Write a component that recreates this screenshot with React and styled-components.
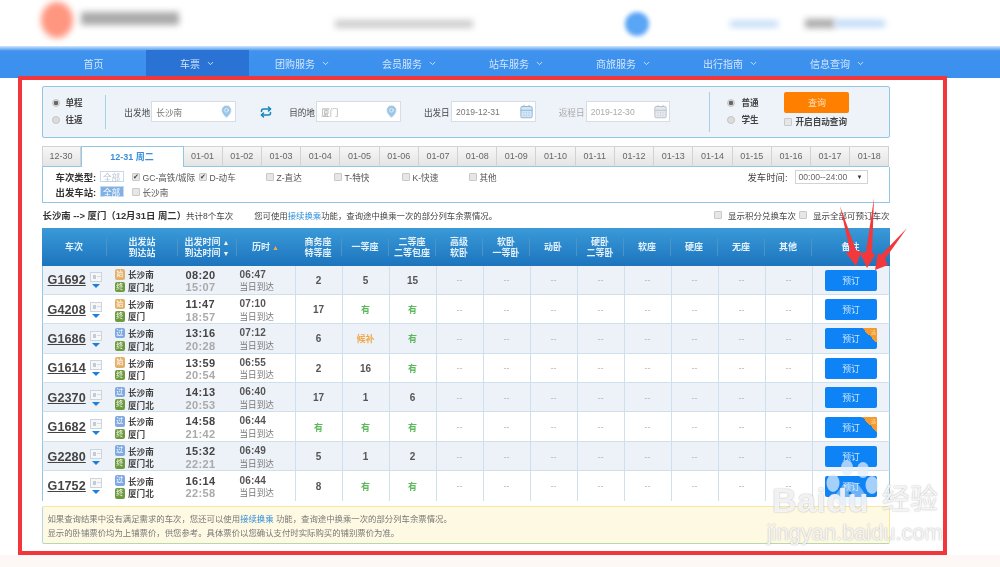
import React from "react";
import styled, { createGlobalStyle } from "styled-components";
import { MapPin, CalendarDays, Repeat, ChevronDown } from "lucide-react";

const FONT = `"Liberation Sans", "Noto Sans CJK SC", sans-serif`;
const COLS = "65px 71px 59px 58px repeat(11, 47px) 78px";

const tabDates = [
  "01-01", "01-02", "01-03", "01-04", "01-05", "01-06", "01-07", "01-08", "01-09",
  "01-10", "01-11", "01-12", "01-13", "01-14", "01-15", "01-16", "01-17", "01-18",
];

const navItems = [
  { label: "首页", w: 105 },
  { label: "车票", w: 103, arrow: true, active: true },
  { label: "团购服务", w: 107, arrow: true },
  { label: "会员服务", w: 107, arrow: true },
  { label: "站车服务", w: 107, arrow: true },
  { label: "商旅服务", w: 107, arrow: true },
  { label: "出行指南", w: 107, arrow: true },
  { label: "信息查询", w: 107, arrow: true },
];

const headCols = [
  ["商务座", "特等座"], ["一等座"], ["二等座", "二等包座"], ["高级", "软卧"], ["软卧", "一等卧"],
  ["动卧"], ["硬卧", "二等卧"], ["软座"], ["硬座"], ["无座"], ["其他"],
];

const trains = [
  { no: "G1692", from: "start", to: "厦门北", dep: "08:20", arr: "15:07", dur: "06:47", seats: ["2", "5", "15"] },
  { no: "G4208", from: "start", to: "厦门", dep: "11:47", arr: "18:57", dur: "07:10", seats: ["17", "有", "有"] },
  { no: "G1686", from: "pass", to: "厦门北", dep: "13:16", arr: "20:28", dur: "07:12", seats: ["6", "候补", "有"], badge: true },
  { no: "G1614", from: "start", to: "厦门", dep: "13:59", arr: "20:54", dur: "06:55", seats: ["2", "16", "有"] },
  { no: "G2370", from: "pass", to: "厦门北", dep: "14:13", arr: "20:53", dur: "06:40", seats: ["17", "1", "6"] },
  { no: "G1682", from: "pass", to: "厦门", dep: "14:58", arr: "21:42", dur: "06:44", seats: ["有", "有", "有"], badge: true },
  { no: "G2280", from: "pass", to: "厦门北", dep: "15:32", arr: "22:21", dur: "06:49", seats: ["5", "1", "2"] },
  { no: "G1752", from: "pass", to: "厦门北", dep: "16:14", arr: "22:58", dur: "06:44", seats: ["8", "有", "有"] },
];

const GlobalStyle = createGlobalStyle`
  html, body { margin: 0; padding: 0; background: #fff; }
  body { font-family: ${FONT}; font-size: 10px; color: #333; overflow: hidden; }
  #root { width: 1000px; height: 567px; overflow: hidden; }
`;

const Page = styled.div`
  position: relative;
  width: 1000px;
  height: 567px;
  overflow: hidden;
  background: linear-gradient(#fff 555px, #fdf7f5 555px);
  filter: blur(0.4px);
`;

const TopBar = styled.header`
  height: 46px;
  display: flex;
  align-items: flex-start;
  background: #fff;
`;

const LogoDot = styled.div`
  width: 32px;
  height: 36px;
  margin: 2px 0 0 41px;
  border-radius: 50%;
  background: #ff9680;
  filter: blur(3px);
`;

const BlurBar = styled.div`
  width: ${(p) => p.$w}px;
  height: ${(p) => p.$h}px;
  margin-left: ${(p) => p.$ml}px;
  margin-top: ${(p) => p.$mt}px;
  background: ${(p) => p.$c};
  filter: blur(3px);
`;

const SearchDot = styled.div`
  width: 24px;
  height: 24px;
  margin: 12px 0 0 152px;
  border-radius: 50%;
  background: #5aa5f5;
  filter: blur(2px);
`;

const Nav = styled.nav`
  height: 32px;
  box-sizing: border-box;
  padding: 4px 0 0 41px;
  display: flex;
  background: linear-gradient(#d2e6fb 0, #3f93ee 5px, #3b8fee 100%);
`;

const NavItem = styled.div`
  width: ${(p) => p.$w}px;
  flex: none;
  display: flex;
  justify-content: center;
  align-items: center;
  gap: 6px;
  height: 26px;
  color: #d3e6fb;
  font-size: 10px;
  background: ${(p) => (p.$active ? "#2a72d4" : "transparent")};
  svg { width: 9px; height: 9px; }
`;

const Frame = styled.main`
  width: 929px;
  height: 479px;
  box-sizing: border-box;
  margin: -2px 0 0 18px;
  position: relative;
  border: 4.5px solid #f1373b;
  background: #fff;
  padding: 5.5px 0 0 19.5px;
`;

const SearchPanel = styled.section`
  width: 848px;
  height: 52px;
  box-sizing: border-box;
  display: flex;
  align-items: center;
  background: #eef3fa;
  border: 1px solid #93c5e4;
  border-radius: 2px;
`;

const TripType = styled.div`
  width: 54px;
  height: 34px;
  margin-left: 9px;
  border-right: 1px solid #a9cfe6;
  display: flex;
  flex-direction: column;
  justify-content: center;
  gap: 6px;
`;

const ChoiceRow = styled.label`
  display: flex;
  align-items: center;
  gap: ${(p) => p.$gap || 6}px;
  color: #444;
  font-size: 8.6px;
  font-weight: 700;
  line-height: 11px;
  white-space: nowrap;
`;

const Radio = styled.span`
  width: 8px;
  height: 8px;
  border-radius: 50%;
  flex: none;
  background: ${(p) => (p.$on ? "radial-gradient(#666 0 2px, #d8d8d8 2.5px)" : "#dcdcdc")};
  border: 1px solid #c4c4c4;
  box-sizing: border-box;
`;

const FieldLabel = styled.span`
  width: 26px;
  flex: none;
  margin-left: ${(p) => p.$ml}px;
  margin-right: 1px;
  white-space: nowrap;
  font-size: 8.6px;
  color: ${(p) => (p.$muted ? "#aaa" : "#444")};
`;

const FieldBox = styled.div`
  width: 85px;
  height: 21px;
  box-sizing: border-box;
  display: flex;
  align-items: center;
  justify-content: space-between;
  padding: 0 1px 0 4px;
  background: #fff;
  border: 1px solid #d6dde5;
  color: ${(p) => (p.$muted ? "#aaa" : "#777")};
  font-size: 8.6px;
`;

const Swap = styled.span`
  width: 12px;
  display: flex;
  margin-left: 24px;
  color: #0f88b8;
`;

const RightTools = styled.div`
  width: 179px;
  height: 40px;
  flex: none;
  margin-left: 39px;
  border-left: 1px solid #a9cfe6;
  display: flex;
  padding-left: 17px;
  box-sizing: border-box;
`;

const KindCol = styled.div`
  width: 57px;
  flex: none;
  display: flex;
  flex-direction: column;
  justify-content: center;
  gap: 6px;
`;

const QueryCol = styled.div`
  display: flex;
  flex-direction: column;
  gap: 4px;
`;

const QueryButton = styled.button`
  width: 65px;
  height: 21px;
  border: 0;
  border-radius: 2px;
  padding: 0;
  background: #ff8000;
  color: #ffe0bc;
  font: 9px ${FONT};
`;

const Check = styled.span`
  width: 8px;
  height: 8px;
  flex: none;
  box-sizing: border-box;
  display: inline-flex;
  align-items: center;
  justify-content: center;
  border: 1px solid #c9c9c9;
  border-radius: 1px;
  background: #e6e6e6;
  color: #444;
  font-size: 7px;
  line-height: 1;
`;

const DateTabs = styled.div`
  display: flex;
  width: 848px;
  height: 21px;
  margin-top: 8px;
`;

const DateTab = styled.div`
  width: ${(p) => p.$w}px;
  flex: none;
  box-sizing: border-box;
  display: flex;
  align-items: center;
  justify-content: center;
  font-size: 9px;
  color: ${(p) => (p.$active ? "#3a8fd8" : "#666")};
  font-weight: ${(p) => (p.$active ? 700 : 400)};
  background: ${(p) => (p.$active ? "#fff" : "linear-gradient(#f7f7f7, #e4e4e4)")};
  border: 1px solid ${(p) => (p.$active ? "#93c5e4" : "#d2d2d2")};
  border-left-width: ${(p) => (p.$first || p.$active ? 1 : 0)}px;
  border-bottom: ${(p) => (p.$active ? "0" : "1px solid #93c5e4")};
`;

const FilterBox = styled.section`
  width: 848px;
  height: 36px;
  box-sizing: border-box;
  display: grid;
  grid-template-rows: 15px 15px;
  align-content: center;
  border: 1px solid #93c5e4;
  border-top: 0;
`;

const FilterRow = styled.div`
  display: flex;
  align-items: center;
  padding-left: 13px;
  font-size: 8.6px;
  color: #555;
`;

const FilterName = styled.b`
  width: 44px;
  flex: none;
  color: #333;
  font-size: 9.4px;
  white-space: nowrap;
`;

const AllTag = styled.span`
  width: 24px;
  height: 11px;
  flex: none;
  display: flex;
  align-items: center;
  justify-content: center;
  box-sizing: border-box;
  border: 1px solid #c6d8ec;
  background: ${(p) => (p.$on ? "#7fb0e6" : "#fff")};
  color: ${(p) => (p.$on ? "#fff" : "#b8c4d0")};
  font-size: 8.6px;
  margin-right: 8px;
`;

const FilterOption = styled.span`
  width: ${(p) => p.$w}px;
  flex: none;
  display: flex;
  align-items: center;
  gap: 3px;
  white-space: nowrap;
`;

const TimeFilter = styled.div`
  margin-left: auto;
  margin-right: 21px;
  display: flex;
  align-items: center;
  gap: 7px;
  font-size: 9.4px;
  color: #444;
`;

const TimeSelect = styled.div`
  width: 73px;
  height: 14px;
  box-sizing: border-box;
  display: flex;
  justify-content: space-between;
  align-items: center;
  padding: 0 4px 0 3px;
  border: 1px solid #d3d3d3;
  color: #666;
  font-size: 8.6px;
  i { font-style: normal; font-size: 6px; color: #333; }
`;

const SummaryLine = styled.div`
  width: 848px;
  height: 25px;
  display: flex;
  align-items: center;
  font-size: 8.5px;
  color: #444;
  white-space: nowrap;
`;

const Route = styled.b`
  color: #333;
  font-size: 9.4px;
  margin: 0 0 0 1px;
`;

const Hint = styled.span`
  margin-left: 21px;
  font-size: 8.4px;
`;

const BlueLink = styled.span`
  color: #2b8bdc;
`;

const SummaryChecks = styled.span`
  margin-left: auto;
  display: flex;
  align-items: center;
  gap: 3px;
`;

const SummaryCheck = styled.span`
  display: flex;
  align-items: center;
  gap: 6px;
`;

const TableHead = styled.div`
  width: 848px;
  height: 38px;
  display: grid;
  grid-template-columns: ${COLS};
  background: linear-gradient(#3a9ad8, #1c74bd);
`;

const HeadCell = styled.div`
  display: flex;
  flex-direction: column;
  align-items: center;
  justify-content: center;
  position: relative;
  padding-top: 2px;
  box-sizing: border-box;
  color: #e4f1fb;
  font-size: 9px;
  font-weight: 700;
  line-height: 11px;
  &::after {
    content: "";
    position: absolute;
    right: 0;
    top: 10px;
    height: 18px;
    width: 1px;
    background: ${(p) => (p.$noline ? "transparent" : "#4c93c6")};
  }
`;

const Sort = styled.span`
  color: ${(p) => p.$c || "#e8f3fb"};
  font-size: 7px;
  margin-left: 2px;
`;

const Row = styled.div`
  width: 848px;
  height: 29.4px;
  display: grid;
  grid-template-columns: ${COLS};
  background: ${(p) => (p.$alt ? "#edf1f8" : "#fff")};
  border-bottom: ${(p) => (p.$last ? "0" : "1px solid #d0dfec")};
  box-sizing: border-box;
  border-left: 1px solid #93c5e4;
  border-right: 1px solid #93c5e4;
`;

const TrainCell = styled.div`
  display: flex;
  align-items: center;
  padding: 1px 0 0 5px;
  gap: 4px;
`;

const TrainNo = styled.span`
  font-size: 12.6px;
  font-weight: 700;
  color: #444;
  text-decoration: underline;
  letter-spacing: 0.1px;
`;

const TicketMark = styled.span`
  display: flex;
  flex-direction: column;
  align-items: center;
  gap: 2px;
`;

const Card = styled.span`
  width: 12px;
  height: 10px;
  box-sizing: border-box;
  border: 1px solid #ccd5de;
  background:
    linear-gradient(#c3ccd6, #c3ccd6) 2px 2px / 3px 4px no-repeat,
    linear-gradient(#d5dbe2, #d5dbe2) 6px 3px / 4px 1px no-repeat,
    #f6f7f9;
`;

const DownTri = styled.span`
  width: 0;
  height: 0;
  border-left: 4.5px solid transparent;
  border-right: 4.5px solid transparent;
  border-top: 4px solid #1f7ed8;
`;

const StationCell = styled.div`
  display: flex;
  flex-direction: column;
  justify-content: center;
  gap: 1.7px;
  padding: 2px 0 0 7px;
`;

const StationLine = styled.div`
  display: flex;
  align-items: center;
  gap: 3px;
  height: 11px;
  font-size: 8.6px;
  font-weight: 700;
  color: #444;
`;

const StationIcon = styled.span`
  width: 10.5px;
  height: 10.5px;
  flex: none;
  border-radius: 2px;
  background: ${(p) => ({ start: "#e3b068", pass: "#7fa9e0", end: "#6d9a3c" })[p.$kind]};
  color: #fff;
  font-size: 7px;
  font-weight: 400;
  line-height: 10.5px;
  text-align: center;
`;

const TimeCell = styled.div`
  display: flex;
  flex-direction: column;
  justify-content: center;
  padding: 3px 0 0 7px;
  line-height: 12.7px;
  font-size: 11px;
  letter-spacing: 0.4px;
  font-weight: 700;
  color: #444;
`;

const ArrTime = styled.span`
  color: #aaa;
`;

const DurCell = styled.div`
  display: flex;
  flex-direction: column;
  justify-content: center;
  padding: 3px 0 0 2px;
  line-height: 12.7px;
  font-size: 10px;
  font-weight: 700;
  letter-spacing: 0.2px;
  color: #555;
  border-right: 1px solid #d0dfec;
  span { font-weight: 400; font-size: 8.6px; letter-spacing: 0; color: #777; }
`;

const SeatCell = styled.div`
  display: flex;
  align-items: center;
  justify-content: center;
  padding-top: 1px;
  border-right: 1px solid #d0dfec;
  font-size: ${(p) => (p.$tone === "num" ? "10px" : "9px")};
  font-weight: ${(p) => (p.$tone === "none" ? 400 : 700)};
  color: ${(p) => ({ num: "#555", ok: "#5cb85c", wait: "#f0a94c", none: "#b5b5b5" })[p.$tone]};
`;

const ActionCell = styled.div`
  display: flex;
  align-items: center;
  justify-content: center;
  padding: 1px 1px 0 0;
`;

const BookButton = styled.button`
  position: relative;
  width: 52px;
  height: 21px;
  padding: 0;
  border: 0;
  border-radius: 2px;
  overflow: hidden;
  background: #0d83f5;
  color: #cfe6fd;
  font: 8.8px ${FONT};
`;

const CornerBadge = styled.span`
  position: absolute;
  top: 0;
  right: 0;
  width: 15px;
  height: 15px;
  background: linear-gradient(45deg, transparent 50%, #f59a2c 50%);
  color: #ffd9a8;
  font-size: 5px;
  line-height: 9px;
  text-align: right;
  padding-right: 1px;
  box-sizing: border-box;
`;

const Notice = styled.section`
  width: 848px;
  height: 38px;
  box-sizing: border-box;
  margin-top: 5px;
  padding: 5px 0 0 5px;
  background: #fef9e3;
  border: 1px solid #f4e7a0;
  border-bottom-color: #b8d8a8;
  border-left-color: #b5d6dc;
  border-radius: 2px;
  font-size: 8.4px;
  line-height: 14.5px;
  color: #777;
`;

const Arrows = styled.svg`
  position: absolute;
  left: 0;
  top: 0;
  pointer-events: none;
`;

const Watermark = styled.div`
  position: absolute;
  left: 766px;
  top: 458px;
  width: 182px;
  height: 90px;
  color: rgba(255, 255, 255, 0.85);
  text-shadow: 0 0 1.5px rgba(150, 150, 150, 0.9);
  font-family: "Liberation Sans", "Noto Sans CJK SC", sans-serif;
`;

const MarkWord = styled.span`
  position: absolute;
  left: ${(p) => p.$x}px;
  top: ${(p) => p.$y}px;
  font-size: ${(p) => p.$s}px;
  font-weight: ${(p) => p.$weight || 400};
  letter-spacing: ${(p) => p.$ls || 0}px;
  line-height: 1;
  white-space: nowrap;
`;

const Paw = styled.svg`
  position: absolute;
  left: 54px;
  top: 0;
`;

const Pin = () => <MapPin size={15} color="#fff" fill="#9cc6e6" strokeWidth={1} />;

function App() {
  return (
    <Page>
      <GlobalStyle />
      <TopBar>
        <LogoDot />
        <BlurBar $w={98} $h={13} $ml={8} $mt={12} $c="#aaa" />
        <BlurBar $w={138} $h={8} $ml={156} $mt={20} $c="#ccc" />
        <SearchDot />
        <BlurBar $w={48} $h={6} $ml={81} $mt={21} $c="#bcd8f6" />
        <BlurBar $w={30} $h={9} $ml={27} $mt={19} $c="#aaa" />
        <BlurBar $w={50} $h={7} $ml={0} $mt={20} $c="#bcd8f6" />
      </TopBar>
      <Nav>
        {navItems.map((item) => (
          <NavItem key={item.label} $w={item.w} $active={item.active}>
            {item.label}
            {item.arrow && <ChevronDown strokeWidth={2.5} />}
          </NavItem>
        ))}
      </Nav>
      <Frame>
        <SearchPanel>
          <TripType>
            <ChoiceRow><Radio $on />单程</ChoiceRow>
            <ChoiceRow><Radio />往返</ChoiceRow>
          </TripType>
          <FieldLabel $ml={18}>出发地</FieldLabel>
          <FieldBox>长沙南<Pin /></FieldBox>
          <Swap><Repeat size={14} strokeWidth={3} /></Swap>
          <FieldLabel $ml={17}>目的地</FieldLabel>
          <FieldBox $muted>厦门<Pin /></FieldBox>
          <FieldLabel $ml={23}>出发日</FieldLabel>
          <FieldBox>2019-12-31<CalendarDays size={15} color="#8db8dc" fill="#d6e5f2" strokeWidth={1.6} /></FieldBox>
          <FieldLabel $ml={23} $muted>返程日</FieldLabel>
          <FieldBox $muted>2019-12-30<CalendarDays size={15} color="#b9c4d0" fill="#e4e8ed" strokeWidth={1.6} /></FieldBox>
          <RightTools>
            <KindCol>
              <ChoiceRow><Radio $on />普通</ChoiceRow>
              <ChoiceRow><Radio />学生</ChoiceRow>
            </KindCol>
            <QueryCol>
              <QueryButton>查询</QueryButton>
              <ChoiceRow $gap={3}><Check />开启自动查询</ChoiceRow>
            </QueryCol>
          </RightTools>
        </SearchPanel>

        <DateTabs>
          <DateTab $w={39} $first>12-30</DateTab>
          <DateTab $w={103} $active>12-31 周二</DateTab>
          {tabDates.map((d) => (
            <DateTab key={d} $w={39.22}>{d}</DateTab>
          ))}
        </DateTabs>

        <FilterBox>
          <FilterRow>
            <FilterName>车次类型:</FilterName>
            <AllTag>全部</AllTag>
            <FilterOption $w={67}><Check>✔</Check>GC-高铁/城际</FilterOption>
            <FilterOption $w={67}><Check>✔</Check>D-动车</FilterOption>
            <FilterOption $w={68}><Check />Z-直达</FilterOption>
            <FilterOption $w={68}><Check />T-特快</FilterOption>
            <FilterOption $w={67}><Check />K-快速</FilterOption>
            <FilterOption $w={40}><Check />其他</FilterOption>
            <TimeFilter>
              发车时间:
              <TimeSelect>00:00--24:00<i>▼</i></TimeSelect>
            </TimeFilter>
          </FilterRow>
          <FilterRow>
            <FilterName>出发车站:</FilterName>
            <AllTag $on>全部</AllTag>
            <FilterOption $w={60}><Check />长沙南</FilterOption>
          </FilterRow>
        </FilterBox>

        <SummaryLine>
          <Route>长沙南 --&gt; 厦门（12月31日 周二）</Route>共计8个车次
          <Hint>您可使用<BlueLink>接续换乘</BlueLink>功能，查询途中换乘一次的部分列车余票情况。</Hint>
          <SummaryChecks>
            <SummaryCheck><Check />显示积分兑换车次</SummaryCheck>
            <SummaryCheck><Check />显示全部可预订车次</SummaryCheck>
          </SummaryChecks>
        </SummaryLine>

        <TableHead>
          <HeadCell>车次</HeadCell>
          <HeadCell><span>出发站</span><span>到达站</span></HeadCell>
          <HeadCell>
            <span>出发时间<Sort>▲</Sort></span>
            <span>到达时间<Sort>▼</Sort></span>
          </HeadCell>
          <HeadCell $noline><span>历时<Sort $c="#f0a94c">▲</Sort></span></HeadCell>
          {headCols.map((lines) => (
            <HeadCell key={lines.join()}>
              {lines.map((l) => <span key={l}>{l}</span>)}
            </HeadCell>
          ))}
          <HeadCell $noline>备注</HeadCell>
        </TableHead>

        {trains.map((t, i) => (
          <Row key={t.no} $alt={i % 2 === 0} $last={i === trains.length - 1}>
            <TrainCell>
              <TrainNo>{t.no}</TrainNo>
              <TicketMark><Card /><DownTri /></TicketMark>
            </TrainCell>
            <StationCell>
              <StationLine>
                <StationIcon $kind={t.from}>{t.from === "start" ? "始" : "过"}</StationIcon>长沙南
              </StationLine>
              <StationLine>
                <StationIcon $kind="end">终</StationIcon>{t.to}
              </StationLine>
            </StationCell>
            <TimeCell>{t.dep}<ArrTime>{t.arr}</ArrTime></TimeCell>
            <DurCell>{t.dur}<span>当日到达</span></DurCell>
            {t.seats.map((s, j) => (
              <SeatCell key={j} $tone={s === "有" ? "ok" : s === "候补" ? "wait" : "num"}>{s}</SeatCell>
            ))}
            {Array.from({ length: 8 }).map((_, j) => (
              <SeatCell key={j} $tone="none">--</SeatCell>
            ))}
            <ActionCell>
              <BookButton>预订{t.badge && <CornerBadge>选</CornerBadge>}</BookButton>
            </ActionCell>
          </Row>
        ))}

        <Notice>
          如果查询结果中没有满足需求的车次，您还可以使用<BlueLink>接续换乘</BlueLink> 功能，查询途中换乘一次的部分列车余票情况。
          <br />
          显示的卧铺票价均为上铺票价，供您参考。具体票价以您确认支付时实际购买的铺别票价为准。
        </Notice>
      </Frame>

      <Arrows width="1000" height="567" viewBox="0 0 1000 567">
        <g fill="#f2383a">
          <polygon points="840,206 856,250 861,252 856,266 846,253 850,251" />
          <polygon points="874,198 872,252 875,255 867,268 860,253 866,252" />
          <polygon points="907,228 885,259 888,265 875,270 878,253 881,255" />
        </g>
      </Arrows>

      <Watermark>
        <MarkWord $x={6} $y={25} $s={34} $ls={0.5} $weight={700}>Baidu</MarkWord>
        <Paw width="60" height="56" viewBox="0 0 60 56">
          <g fill="rgba(225,238,252,0.72)">
            <ellipse cx="13" cy="25" rx="6.5" ry="9" />
            <ellipse cx="27" cy="10" rx="6" ry="8" />
            <ellipse cx="43" cy="12" rx="6" ry="8" />
            <ellipse cx="52" cy="27" rx="6.5" ry="9" />
          </g>
          <path
            d="M31 24c8 0 11 8 14 12 4 6 0 12-7 11-3 0-5-1-7-1s-5 1-8 1c-7 1-11-5-7-11 4-4 7-12 15-12z"
            fill="rgba(225,238,252,0.45)"
          />
          <circle cx="30" cy="35" r="1.5" fill="#1670d0" />
        </Paw>
        <MarkWord $x={116} $y={28} $s={28}>经验</MarkWord>
        <MarkWord $x={1} $y={64} $s={21.8}>jingyan.baidu.com</MarkWord>
      </Watermark>
    </Page>
  );
}

export default App;
